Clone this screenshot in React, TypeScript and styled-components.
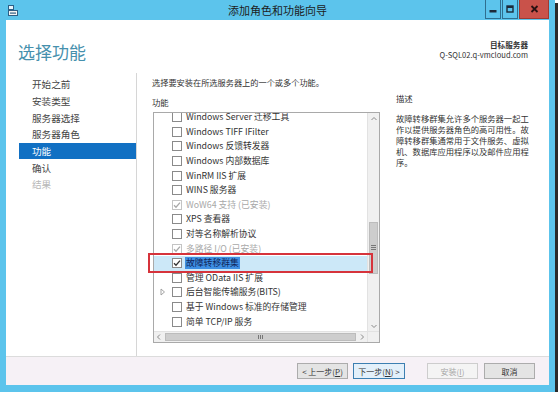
import React from 'react'
import styled, { createGlobalStyle } from 'styled-components'

const GlobalStyle = createGlobalStyle`
  html, body {
    margin: 0;
    padding: 0;
    background: #ffffff;
  }
  body {
    font-family: "Noto Sans CJK SC", "Liberation Sans", sans-serif;
    color: #2b2b2b;
  }
`

const Window = styled.div`
  width: 555px;
  height: 392px;
  box-sizing: border-box;
  padding: 0 6px 7px 6px;
  background: #5cc4ec;
  display: flex;
  flex-direction: column;
  box-shadow: 3px 3px 0 #2a2a2a;
`

const TitleBar = styled.div`
  height: 20px;
  flex: none;
  display: grid;
  grid-template-columns: 1fr auto 1fr;
  align-items: stretch;
`

const TitleIcon = styled.div`
  display: flex;
  align-items: center;
  padding-left: 2px;
`

const TitleText = styled.div`
  align-self: center;
  font-size: 11px;
  line-height: 14px;
  color: #1c1c1c;
`

const Controls = styled.div`
  display: flex;
  justify-content: flex-end;
  align-items: flex-start;
  gap: 1px;
`

const CtrlButton = styled.div<{ $close?: boolean }>`
  width: ${p => (p.$close ? 30 : 16)}px;
  height: 19px;
  box-sizing: border-box;
  display: flex;
  align-items: center;
  justify-content: center;
  background: ${p => (p.$close ? '#c9524a' : '#5cc4ec')};
  border: 1px solid ${p => (p.$close ? '#9c3a33' : '#2f6f8f')};
  border-top: none;
`

const Client = styled.div`
  flex: 1;
  background: #ffffff;
  display: flex;
  flex-direction: column;
  min-height: 0;
`

const Header = styled.div`
  height: 50px;
  flex: none;
  display: flex;
  justify-content: space-between;
  padding: 0 21px 0 12px;
`

const Heading = styled.div`
  margin-top: 23px;
  font-size: 17px;
  line-height: 17px;
  color: #4690ad;
`

const ServerInfo = styled.div`
  margin-top: 20px;
  text-align: right;
  font-size: 7.6px;
  line-height: 10px;
  color: #333;
  b {
    font-weight: bold;
  }
`

const Main = styled.div`
  flex: 1;
  display: flex;
  min-height: 0;
`

const Nav = styled.div`
  width: 131px;
  box-sizing: border-box;
  margin-top: 3px;
  padding-top: 3px;
  border-right: 1px solid #d6d6d6;
  display: flex;
  flex-direction: column;
`

const NavItem = styled.div<{ $active?: boolean; $muted?: boolean }>`
  height: 16.7px;
  margin-left: 13px;
  padding-left: 13px;
  display: flex;
  align-items: center;
  font-size: 9.6px;
  color: ${p => (p.$active ? '#ffffff' : p.$muted ? '#b8b8b8' : '#444444')};
  background: ${p => (p.$active ? '#1170c3' : 'transparent')};
`

const Content = styled.div`
  flex: 1;
  display: flex;
  padding-left: 15px;
`

const FeatureCol = styled.div`
  width: 228px;
  display: flex;
  flex-direction: column;
`

const Instruction = styled.div`
  margin-top: 6px;
  font-size: 8.2px;
  line-height: 12px;
  color: #333;
`

const Label = styled.div<{ $top: number }>`
  margin-top: ${p => p.$top}px;
  font-size: 8.4px;
  line-height: 12px;
  color: #333;
`

const ListFrame = styled.div`
  position: relative;
  margin: 4px 0 0 1px;
  width: 227px;
  height: 231px;
  box-sizing: border-box;
  border: 1px solid #a9a9a9;
  display: grid;
  grid-template-columns: 1fr 12px;
  grid-template-rows: 1fr 11px;
`

const Viewport = styled.div`
  overflow: hidden;
`

const Rows = styled.div`
  margin-top: -3px;
  display: flex;
  flex-direction: column;
`

const Row = styled.div<{ $selected?: boolean }>`
  height: 14.6px;
  flex: none;
  display: flex;
  align-items: center;
  padding-left: 2px;
  background: ${p => (p.$selected ? '#cce8f8' : 'transparent')};
`

const Expander = styled.div`
  width: 14px;
  display: flex;
  align-items: center;
  justify-content: center;
`

const Box = styled.div<{ $disabled?: boolean }>`
  width: 10px;
  height: 10px;
  box-sizing: border-box;
  margin-left: 2px;
  border: 1px solid ${p => (p.$disabled ? '#c4c4c4' : '#8a8a8a')};
  background: #fff;
  display: flex;
  align-items: center;
  justify-content: center;
`

const RowText = styled.span<{ $disabled?: boolean; $selected?: boolean }>`
  margin-left: 3px;
  font-size: 8.8px;
  line-height: 12px;
  white-space: nowrap;
  padding: 0 1px;
  color: ${p => (p.$disabled ? '#a8a8a8' : p.$selected ? '#10265a' : '#333333')};
  background: ${p => (p.$selected ? '#3e8fe3' : 'transparent')};
`

const VScroll = styled.div`
  background: #f0f0f0;
  border-left: 1px solid #e2e2e2;
  display: flex;
  flex-direction: column;
`

const HScroll = styled.div`
  background: #f0f0f0;
  border-top: 1px solid #e2e2e2;
  display: flex;
  align-items: stretch;
`

const Corner = styled.div`
  background: #f0f0f0;
  border-top: 1px solid #e2e2e2;
  border-left: 1px solid #e2e2e2;
`

const ArrowCell = styled.div<{ $size?: number }>`
  flex: none;
  width: ${p => p.$size ?? 11}px;
  height: ${p => p.$size ?? 11}px;
  display: flex;
  align-items: center;
  justify-content: center;
`

const Track = styled.div<{ $vertical?: boolean }>`
  flex: 1;
  display: flex;
  flex-direction: ${p => (p.$vertical ? 'column' : 'row')};
  padding: ${p => (p.$vertical ? '98px 1px 0 1px' : '1px 1px')};
`

const Thumb = styled.div<{ $vertical?: boolean }>`
  ${p => (p.$vertical ? 'height: 50px;' : 'flex: 1;')}
  background: #cdcdcd;
  border: 1px solid #bcbcbc;
  display: flex;
  align-items: center;
  justify-content: center;
`

const Grip = styled.div<{ $vertical?: boolean }>`
  width: ${p => (p.$vertical ? 5 : 6)}px;
  height: ${p => (p.$vertical ? 6 : 4)}px;
  background: ${p =>
    p.$vertical
      ? 'repeating-linear-gradient(#777 0 1px, transparent 1px 2px)'
      : 'repeating-linear-gradient(90deg, #777 0 1px, transparent 1px 2px)'};
`

const Callout = styled.div`
  position: absolute;
  left: -6px;
  top: 140px;
  width: 225px;
  height: 20px;
  box-sizing: border-box;
  border: 2px solid #d6333b;
  pointer-events: none;
`

const DescCol = styled.div`
  margin-left: 16px;
  width: 136px;
  display: flex;
  flex-direction: column;
`

const DescText = styled.div`
  margin-top: 9px;
  font-size: 8.3px;
  line-height: 10.9px;
  color: #333;
`

const Footer = styled.div`
  height: 29px;
  flex: none;
  box-sizing: border-box;
  border-top: 1px solid #dcdcdc;
  background: #f6f1f6;
  display: flex;
  align-items: center;
  justify-content: flex-end;
  padding-right: 14px;
`

const Button = styled.div<{ $variant?: 'default' | 'disabled'; $gap?: number }>`
  width: ${p => (p.$variant === 'default' ? 52 : 51)}px;
  height: 16px;
  box-sizing: border-box;
  margin-left: ${p => p.$gap ?? 5}px;
  display: flex;
  align-items: center;
  justify-content: center;
  font-size: 8px;
  white-space: nowrap;
  border: 1px solid
    ${p => (p.$variant === 'default' ? '#3c7fb1' : p.$variant === 'disabled' ? '#cdcdcd' : '#acacac')};
  background: ${p =>
    p.$variant === 'default' ? '#e3f0fa' : p.$variant === 'disabled' ? '#f4f4f4' : '#e4e4e4'};
  color: ${p => (p.$variant === 'disabled' ? '#a6a6a6' : '#333')};
  u {
    text-decoration: underline;
  }
`

const Check = ({ gray }: { gray?: boolean }) => (
  <svg width='8' height='8' viewBox='0 0 8 8'>
    <path d='M1 4.2 L3 6.2 L7 1.6' fill='none' stroke={gray ? '#a8a8a8' : '#333'} strokeWidth='1.3' />
  </svg>
)

const Chevron = ({ dir }: { dir: 'up' | 'down' | 'left' | 'right' }) => {
  const d = {
    up: 'M1.5 5 L4 2.5 L6.5 5',
    down: 'M1.5 3 L4 5.5 L6.5 3',
    left: 'M5 1.5 L2.5 4 L5 6.5',
    right: 'M3 1.5 L5.5 4 L3 6.5',
  }[dir]
  return (
    <svg width='8' height='8' viewBox='0 0 8 8'>
      <path d={d} fill='none' stroke='#8a8a8a' strokeWidth='1' />
    </svg>
  )
}

type Feature = {
  name: string
  checked?: boolean
  disabled?: boolean
  selected?: boolean
  expandable?: boolean
}

const features: Feature[] = [
  { name: 'Windows Server 迁移工具' },
  { name: 'Windows TIFF IFilter' },
  { name: 'Windows 反馈转发器' },
  { name: 'Windows 内部数据库' },
  { name: 'WinRM IIS 扩展' },
  { name: 'WINS 服务器' },
  { name: 'WoW64 支持 (已安装)', checked: true, disabled: true },
  { name: 'XPS 查看器' },
  { name: '对等名称解析协议' },
  { name: '多路径 I/O (已安装)', checked: true, disabled: true },
  { name: '故障转移群集', checked: true, selected: true },
  { name: '管理 OData IIS 扩展' },
  { name: '后台智能传输服务(BITS)', expandable: true },
  { name: '基于 Windows 标准的存储管理' },
  { name: '简单 TCP/IP 服务' },
]

const steps = ['开始之前', '安装类型', '服务器选择', '服务器角色', '功能', '确认', '结果']

export default function App() {
  return (
    <>
      <GlobalStyle />
      <Window>
        <TitleBar>
          <TitleIcon>
            <svg width='10' height='11' viewBox='0 0 10 11'>
              <rect x='0.5' y='0.5' width='5' height='4' fill='#e8f4fb' stroke='#2d5f86' />
              <rect x='0.5' y='5.5' width='9' height='5' fill='#f4f4f4' stroke='#2d5f86' />
              <rect x='2' y='7.5' width='6' height='1.2' fill='#2d5f86' />
            </svg>
          </TitleIcon>
          <TitleText>添加角色和功能向导</TitleText>
          <Controls>
            <CtrlButton>
              <svg width='8' height='8' viewBox='0 0 8 8'>
                <rect x='0.5' y='5' width='7' height='2.5' fill='#1d2b3a' />
              </svg>
            </CtrlButton>
            <CtrlButton>
              <svg width='8' height='8' viewBox='0 0 8 8'>
                <rect x='1' y='1' width='6' height='6' fill='none' stroke='#1d2b3a' strokeWidth='1.4' />
                <rect x='1' y='1' width='6' height='2' fill='#1d2b3a' />
              </svg>
            </CtrlButton>
            <CtrlButton $close>
              <svg width='9' height='8' viewBox='0 0 9 8'>
                <path d='M1.5 1 L7.5 7 M7.5 1 L1.5 7' stroke='#2a1212' strokeWidth='1.8' />
              </svg>
            </CtrlButton>
          </Controls>
        </TitleBar>

        <Client>
          <Header>
            <Heading>选择功能</Heading>
            <ServerInfo>
              <b>目标服务器</b>
              <div>Q-SQL02.q-vmcloud.com</div>
            </ServerInfo>
          </Header>

          <Main>
            <Nav>
              {steps.map(s => (
                <NavItem key={s} $active={s === '功能'} $muted={s === '结果'}>
                  {s}
                </NavItem>
              ))}
            </Nav>

            <Content>
              <FeatureCol>
                <Instruction>选择要安装在所选服务器上的一个或多个功能。</Instruction>
                <Label $top={8}>功能</Label>
                <ListFrame>
                  <Viewport>
                    <Rows>
                      {features.map(f => (
                        <Row key={f.name} $selected={f.selected}>
                          <Expander>
                            {f.expandable && (
                              <svg width='6' height='8' viewBox='0 0 6 8'>
                                <path d='M1 1 L4.5 4 L1 7 Z' fill='none' stroke='#9a9a9a' strokeWidth='0.9' />
                              </svg>
                            )}
                          </Expander>
                          <Box $disabled={f.disabled}>{f.checked && <Check gray={f.disabled} />}</Box>
                          <RowText $disabled={f.disabled} $selected={f.selected}>
                            {f.name}
                          </RowText>
                        </Row>
                      ))}
                    </Rows>
                  </Viewport>
                  <VScroll>
                    <ArrowCell>
                      <Chevron dir='up' />
                    </ArrowCell>
                    <Track $vertical>
                      <Thumb $vertical>
                        <Grip $vertical />
                      </Thumb>
                    </Track>
                    <ArrowCell>
                      <Chevron dir='down' />
                    </ArrowCell>
                  </VScroll>
                  <HScroll>
                    <ArrowCell $size={10}>
                      <Chevron dir='left' />
                    </ArrowCell>
                    <Track>
                      <Thumb>
                        <Grip />
                      </Thumb>
                    </Track>
                    <ArrowCell $size={10}>
                      <Chevron dir='right' />
                    </ArrowCell>
                  </HScroll>
                  <Corner />
                  <Callout />
                </ListFrame>
              </FeatureCol>

              <DescCol>
                <Label $top={22}>描述</Label>
                <DescText>
                  故障转移群集允许多个服务器一起工作以提供服务器角色的高可用性。故障转移群集通常用于文件服务、虚拟机、数据库应用程序以及邮件应用程序。
                </DescText>
              </DescCol>
            </Content>
          </Main>

          <Footer>
            <Button>
              &lt; 上一步(<u>P</u>)
            </Button>
            <Button $variant='default'>
              下一步(<u>N</u>) &gt;
            </Button>
            <Button $variant='disabled' $gap={22}>
              安装(<u>I</u>)
            </Button>
            <Button $gap={6}>取消</Button>
          </Footer>
        </Client>
      </Window>
    </>
  )
}
